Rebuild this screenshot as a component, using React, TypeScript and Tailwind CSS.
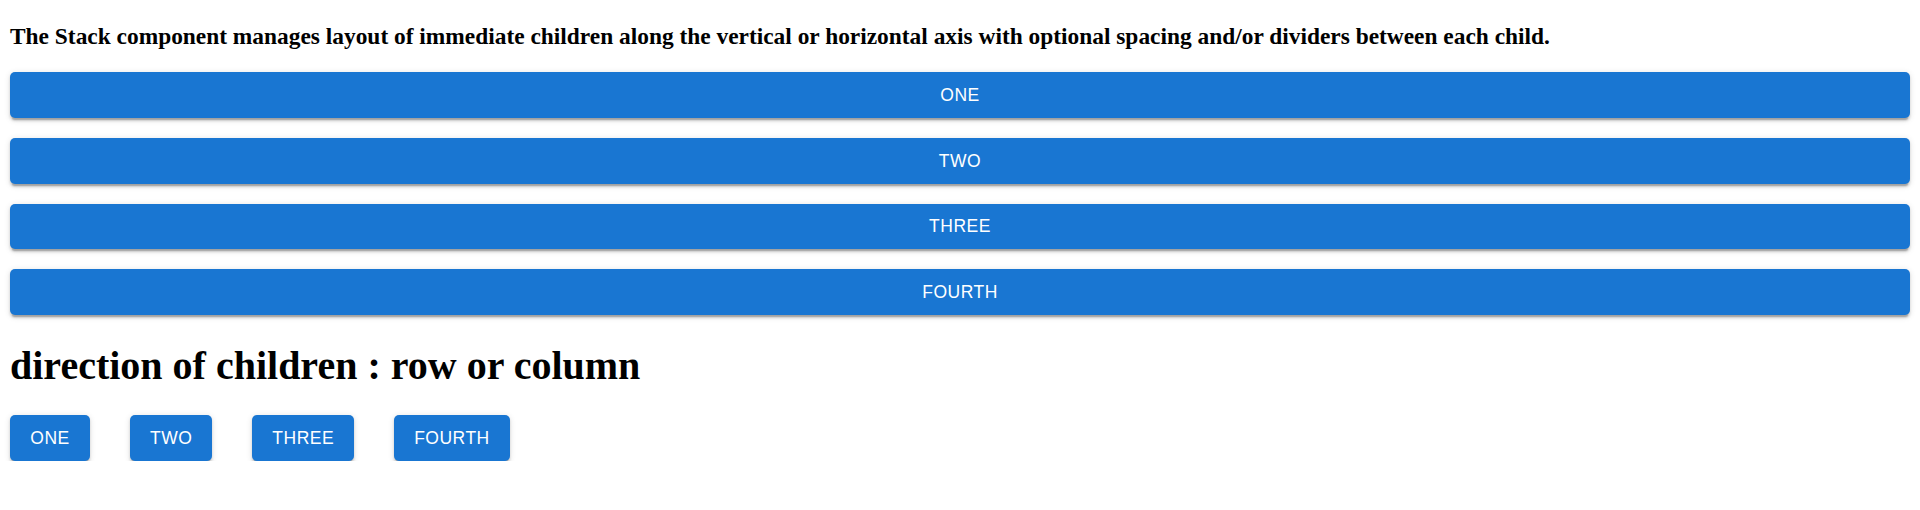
const items = ["One", "Two", "Three", "Fourth"];

function Button({ label, full }: { label: string; full?: boolean }) {
  return (
    <button
      type="button"
      className={
        full
          ? "block w-full min-w-[80px] rounded-[5px] bg-[#1976d2] px-[20px] py-[7.5px] text-center font-['Liberation_Sans',Arial,sans-serif] text-[17.5px] leading-[1.75] font-medium tracking-[0.5px] text-white uppercase shadow-[0px_3.75px_1.25px_-2.5px_rgba(0,0,0,0.2),0px_2.5px_2.5px_0px_rgba(0,0,0,0.14),0px_1.25px_6.25px_0px_rgba(0,0,0,0.12)]"
          : "block min-w-[80px] rounded-[5px] bg-[#1976d2] px-[20px] py-[7.5px] text-center font-['Liberation_Sans',Arial,sans-serif] text-[17.5px] leading-[1.75] font-medium tracking-[0.5px] text-white uppercase shadow-[0px_3.75px_1.25px_-2.5px_rgba(0,0,0,0.2),0px_2.5px_2.5px_0px_rgba(0,0,0,0.14),0px_1.25px_6.25px_0px_rgba(0,0,0,0.12)]"
      }
    >
      {label}
    </button>
  );
}

export default function App() {
  return (
    <div className="bg-white px-[10px] pt-[23.4px] text-black">
      <h3 className="mb-[22px] font-['Liberation_Serif','Times_New_Roman',serif] text-[23.4px] leading-[normal] font-bold">
        The Stack component manages layout of immediate children along the
        vertical or horizontal axis with optional spacing and/or dividers
        between each child.
      </h3>

      {/* column stack */}
      <div className="flex flex-col gap-[20px]">
        {items.map((i) => (
          <Button key={i} label={i} full />
        ))}
      </div>

      <h1 className="mt-[26.8px] mb-[26.8px] font-['Liberation_Serif','Times_New_Roman',serif] text-[40px] leading-[normal] font-bold">
        direction of children : row or column
      </h1>

      {/* row stack */}
      <div className="flex flex-row gap-[40px]">
        {items.map((i) => (
          <Button key={i} label={i} />
        ))}
      </div>
    </div>
  );
}
